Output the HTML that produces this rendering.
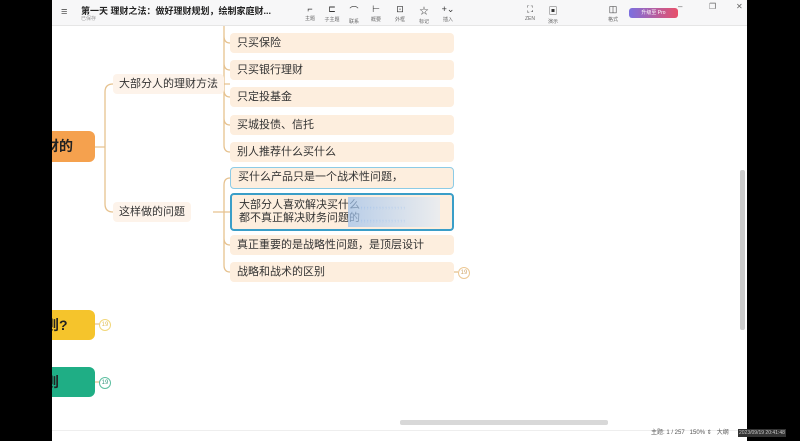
<!DOCTYPE html>
<html><head><meta charset="utf-8"><style>
body{margin:0;width:800px;height:441px;position:relative;overflow:hidden;background:#fff;font-family:"Liberation Sans","Noto Sans CJK SC",sans-serif;}
.abs{position:absolute}
.tb{left:52px;top:0;width:695px;height:25px;background:#f7f7f8;border-bottom:1px solid #e6e6e6}
.ic{position:absolute;top:4px;font-size:9px;color:#333;text-align:center;width:24px}
.ic small{display:block;font-size:5px;color:#666;margin-top:1px}
.node{position:absolute;left:230px;width:224px;height:20px;background:#fdeede;border-radius:4px;font-size:11px;color:#333;line-height:20px;padding-left:7px;box-sizing:border-box}
.mid{position:absolute;height:20px;background:#fdf3ea;border-radius:4px;font-size:11px;color:#333;line-height:20px;padding:0 6px}
.num{position:absolute;width:10px;height:10px;border-radius:50%;font-size:6px;line-height:10px;text-align:center}
.root{position:absolute;left:52px;width:43px;border-radius:0 6px 6px 0;font-size:14px;font-weight:bold;color:#222;overflow:hidden;white-space:nowrap}
.root span{position:relative;left:-7px}
</style></head><body>
<div class="abs" style="left:0;top:0;width:52px;height:441px;background:#000"></div>
<div class="abs" style="left:747px;top:0;width:53px;height:441px;background:#000"></div>
<div class="abs tb">
<div class="abs" style="left:9px;top:6px;font-size:11px;color:#555">≡</div>
<div class="abs" style="left:29px;top:4px;font-size:9px;font-weight:bold;color:#222">第一天 理财之法：做好理财规划，绘制家庭财...</div>
<div class="abs" style="left:29px;top:15px;font-size:5px;color:#999">已保存</div>
<div class="ic" style="left:246px">⌐<small>主题</small></div>
<div class="ic" style="left:268px">⊏<small>子主题</small></div>
<div class="ic" style="left:290px">⌒<small>联系</small></div>
<div class="ic" style="left:312px">⊢<small>概要</small></div>
<div class="ic" style="left:336px">⊡<small>外框</small></div>
<div class="ic" style="left:360px">☆<small>标记</small></div>
<div class="ic" style="left:384px">+⌄<small>插入</small></div>
<div class="ic" style="left:466px">⛶<small>ZEN</small></div>
<div class="ic" style="left:489px">▣<small>演示</small></div>
<div class="ic" style="left:549px">◫<small>格式</small></div>
<div class="abs" style="left:577px;top:8px;width:49px;height:10px;border-radius:3px;background:linear-gradient(90deg,#7b6fe0,#e8506a);color:#fff;font-size:5px;line-height:10px;text-align:center">升级至 Pro</div>
<div class="abs" style="left:626px;top:2px;font-size:8px;color:#666">–</div>
<div class="abs" style="left:657px;top:2px;font-size:8px;color:#666">❐</div>
<div class="abs" style="left:684px;top:2px;font-size:8px;color:#666">✕</div>
</div>
<svg class="abs" style="left:0;top:0" width="800" height="441" fill="none" stroke="#e6c28f" stroke-width="1.3">
<path d="M95 147 H105 M105 147 V92 Q105 84 113 84 M105 147 V204 Q105 212 113 212"/>
<path d="M215 84 H224 M224 26 V145 Q224 152 230 152 M224 36 Q224 43 230 43 M224 63 Q224 70 230 70 M224 90 Q224 97 230 97 M224 118 Q224 125 230 125 M224 84 H230"/>
<path d="M213 212 H224 M224 185 V265 Q224 272 230 272 M224 185 Q224 178 230 178 M224 212 H230 M224 238 Q224 245 230 245"/>
<path d="M454 272 H458"/>
<path d="M95 324 H100 M95 382 H100"/>
</svg>
<div class="root" style="top:131px;height:31px;line-height:31px;background:#f5a14e"><span>财的</span></div>
<div class="root" style="top:310px;height:30px;line-height:30px;background:#f5c42c"><span>则?</span></div>
<div class="root" style="top:367px;height:30px;line-height:30px;background:#1fae85"><span>则</span></div>
<div class="num" style="left:99px;top:319px;border:1px solid #f2d77a;color:#e0c060">19</div>
<div class="num" style="left:99px;top:377px;border:1px solid #5cbfa0;color:#3a9a80">19</div>
<div class="num" style="left:458px;top:267px;border:1px solid #ecc894;color:#d0a870">19</div>
<div class="mid" style="left:113px;top:74px">大部分人的理财方法</div>
<div class="mid" style="left:113px;top:202px">这样做的问题</div>
<div class="node" style="top:33px">只买保险</div>
<div class="node" style="top:60px">只买银行理财</div>
<div class="node" style="top:87px">只定投基金</div>
<div class="node" style="top:115px">买城投债、信托</div>
<div class="node" style="top:142px">别人推荐什么买什么</div>
<div class="node" style="top:167px;height:22px;border:1.5px solid #8ccbe6;line-height:19px">买什么产品只是一个战术性问题，</div>
<div class="node" style="top:193px;height:38px;border:2px solid #3a9ec8;line-height:13px;padding-top:4px">大部分人喜欢解决买什么<span style="color:#b8c8e0">,,,,,,,,,,,,,,,</span><br>都不真正解决财务问题的<span style="color:#b8c8e0">,,,,,,,,,,,,,,,</span></div>
<div class="abs" style="left:348px;top:197px;width:92px;height:30px;background:linear-gradient(90deg,#9cc0ec,#e4ecf5);opacity:.7"></div>
<div class="node" style="top:235px">真正重要的是战略性问题，是顶层设计</div>
<div class="node" style="top:262px">战略和战术的区别</div>
<div class="abs" style="left:740px;top:170px;width:5px;height:160px;background:#ccc;border-radius:2px"></div>
<div class="abs" style="left:400px;top:420px;width:208px;height:5px;background:#d8d8d8;border-radius:2px"></div>
<div class="abs" style="left:52px;top:430px;width:695px;height:11px;border-top:1px solid #eee;background:#fff"></div>
<div class="abs" style="left:651px;top:427px;font-size:6px;color:#555">主题: 1 / 257 &nbsp; 150% ⇕ &nbsp; 大纲</div>
<div class="abs" style="left:738px;top:429px;font-size:5px;color:#ccc;background:#333;padding:1px">2023/09/19 20:41:48</div>
</body></html>
